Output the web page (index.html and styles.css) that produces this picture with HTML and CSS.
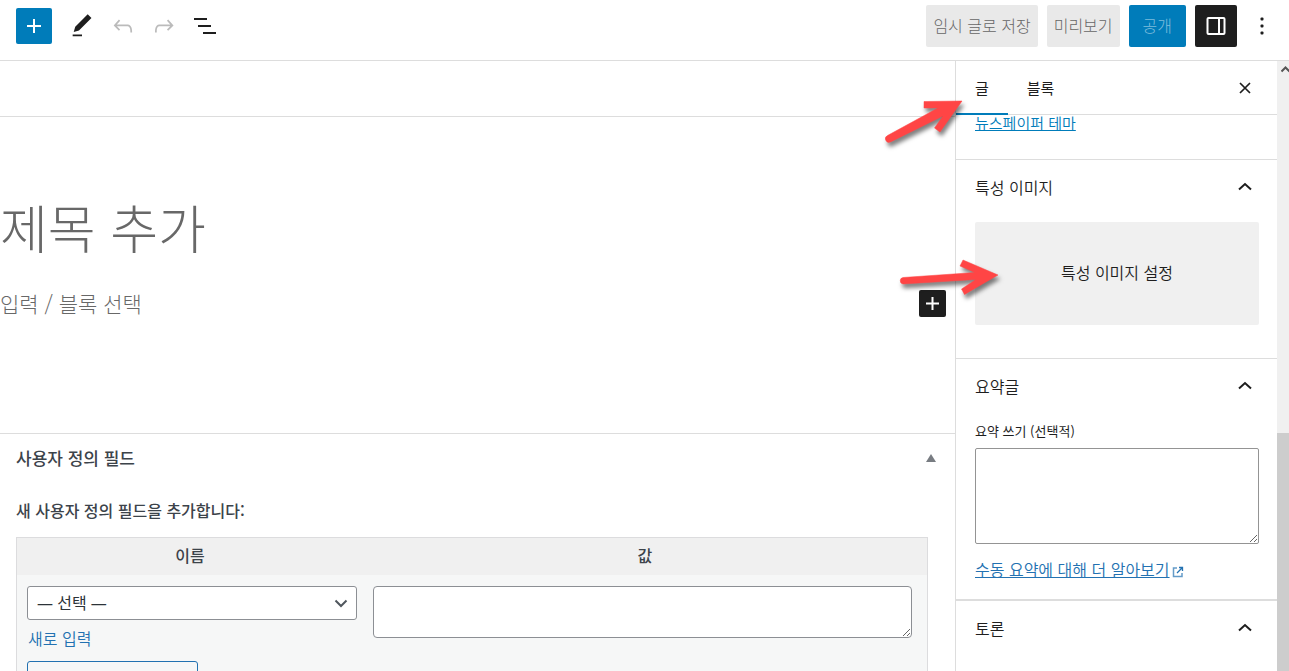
FILE: index.html
```html
<!DOCTYPE html>
<html lang="ko">
<head>
<meta charset="utf-8">
<title>새 글 추가</title>
<link rel="stylesheet" href="styles.css">
</head>
<body>
<div class="app">
  <header class="toolbar">
    <div class="tools">
      <button class="tool tool-add" aria-label="블록 추가"><svg width="24" height="24" viewBox="0 0 24 24"><path d="M12 5v14M5 12h14" stroke="currentColor" stroke-width="2"/></svg></button>
      <button class="tool" aria-label="도구"><svg width="28" height="28" viewBox="0 0 24 24"><path fill="currentColor" d="M20.1 5.1L16.9 2 6.2 12.7l-1.3 4.4 4.500-1.300L20.100 5.100zM4 20.800h8v-1.500H4v1.500z"/></svg></button>
      <button class="tool tool-off" aria-label="되돌리기"><svg width="28" height="28" viewBox="0 0 24 24"><path fill="currentColor" d="M18.3 11.7c-.6-.6-1.4-.9-2.3-.9H6.7l2.9-3.3-1.1-1-4.5 5L8.5 16l1-1-2.7-2.7H16c.5 0 .9.2 1.3.5 1 1 1 3.4 1 4.5v.3h1.5v-.2c0-1.5 0-4.3-1.5-5.7z"/></svg></button>
      <button class="tool tool-off" aria-label="다시 실행"><svg width="28" height="28" viewBox="0 0 24 24"><path fill="currentColor" d="M15.6 6.5l-1.1 1 2.9 3.3H8c-.9 0-1.7.3-2.3.9-1.4 1.5-1.4 4.2-1.4 5.6v.2h1.5v-.3c0-1.1 0-3.5 1-4.5.3-.3.7-.5 1.3-.5h9.2L14.5 15l1.1 1.1 4.6-4.6-4.6-5z"/></svg></button>
      <button class="tool" aria-label="문서 개요"><svg width="28" height="28" viewBox="0 0 28 28"><path d="M3 7h13M7 14h13M12 21h13" stroke="currentColor" stroke-width="2"/></svg></button>
    </div>
    <div class="actions">
      <button class="btn btn-gray">임시 글로 저장</button>
      <button class="btn btn-gray">미리보기</button>
      <button class="btn btn-publish">공개</button>
      <button class="btn btn-settings" aria-label="설정"><svg width="20" height="20" viewBox="0 0 20 20" fill="none" stroke="currentColor" stroke-width="2"><rect x="1.5" y="2" width="17" height="16" rx="1"/><path d="M13 2v16"/></svg></button>
      <button class="more" aria-label="옵션"><svg width="24" height="24" viewBox="0 0 24 24" fill="currentColor"><rect x="10.5" y="3.5" width="3" height="3" rx="1"/><rect x="10.5" y="10.5" width="3" height="3" rx="1"/><rect x="10.5" y="17.5" width="3" height="3" rx="1"/></svg></button>
    </div>
  </header>

  <div class="body">
    <main class="editor">
      <div class="notice"></div>
      <section class="canvas">
        <h1 class="title">제목 추가</h1>
        <div class="prompt">
          <p class="prompt-text">입력 / 블록 선택</p>
          <button class="inserter" aria-label="블록 추가"><svg width="17" height="17" viewBox="0 0 17 17"><path d="M8.5 2v13M2 8.5h13" stroke="currentColor" stroke-width="2"/></svg></button>
        </div>
      </section>
      <section class="metabox">
        <div class="metabox-head">
          <h2 class="metabox-title">사용자 정의 필드</h2>
          <button class="toggle" aria-label="패널 전환"><svg width="10" height="8" viewBox="0 0 10 8"><path d="M5 0l5 8H0z" fill="currentColor"/></svg></button>
        </div>
        <p class="metabox-lead">새 사용자 정의 필드을 추가합니다:</p>
        <table class="fields">
          <thead>
            <tr><th class="col-name"><label for="field-name">이름</label></th><th><label for="field-value">값</label></th></tr>
          </thead>
          <tbody>
            <tr>
              <td class="cell-name">
                <span class="select-wrap">
                  <select id="field-name" class="select"><option>— 선택 —</option></select>
                  <svg class="select-arrow" width="14" height="9" viewBox="0 0 14 9"><path d="M1.500 1.500L7 7l5.500-5.500" fill="none" stroke="currentColor" stroke-width="2"/></svg>
                </span>
                <a class="enter-new" href="#">새로 입력</a>
                <button class="add-field" aria-label="사용자 정의 필드 추가"></button>
              </td>
              <td class="cell-value"><textarea id="field-value" class="area area-value"></textarea></td>
            </tr>
          </tbody>
        </table>
      </section>
    </main>

    <aside class="sidebar">
      <div class="tabs">
        <button class="tab tab-on">글</button>
        <button class="tab">블록</button>
        <button class="close" aria-label="설정 닫기"><svg width="12" height="12" viewBox="0 0 12 12"><path d="M1 1l10 10M11 1L1 11" stroke="currentColor" stroke-width="1.700"/></svg></button>
      </div>
      <div class="panel panel-link"><a class="link" href="#">뉴스페이퍼 테마</a></div>
      <section class="panel panel-image">
        <button class="panel-head">특성 이미지<svg width="14" height="9" viewBox="0 0 14 9"><path d="M1 7.500L7 2l6 5.500" fill="none" stroke="currentColor" stroke-width="2"/></svg></button>
        <button class="set-image">특성 이미지 설정</button>
      </section>
      <section class="panel panel-excerpt">
        <button class="panel-head">요약글<svg width="14" height="9" viewBox="0 0 14 9"><path d="M1 7.500L7 2l6 5.500" fill="none" stroke="currentColor" stroke-width="2"/></svg></button>
        <label class="label" for="excerpt">요약 쓰기 (선택적)</label>
        <textarea id="excerpt" class="area area-excerpt"></textarea>
        <a class="learn" href="#"><span class="learn-text">수동 요약에 대해 더 알아보기</span><svg class="external" width="12" height="12" viewBox="0 0 12 12" fill="none" stroke="currentColor"><path d="M5 2H1.500v8.500H10V7" stroke-width="1.500" opacity=".7"/><path d="M7 1.500h3.500V5M10.500 1.500L5 7" stroke-width="1.300"/></svg></a>
      </section>
      <section class="panel panel-last">
        <button class="panel-head">토론<svg width="14" height="9" viewBox="0 0 14 9"><path d="M1 7.500L7 2l6 5.500" fill="none" stroke="currentColor" stroke-width="2"/></svg></button>
      </section>
      <svg class="arrows" width="130" height="220" viewBox="880 90 130 220" aria-hidden="true">
        <g fill="#ff4545" stroke="#ff4545" stroke-linejoin="round">
          <path d="M962 101L924 101.500V108H938L887.500 135.500A3.500 3.500 0 0 0 890.500 142L943 116L934.500 128L940 132Z" stroke-width=".5"/>
          <path d="M998 275L963 260L960 266L975 272.500L903 277.500A3.300 3.300 0 0 0 903 284L976 279.500L961.500 289L964.500 294.500Z" stroke-width=".5"/>
        </g>
      </svg>
    </aside>
    <div class="scrollbar" aria-hidden="true">
      <svg class="scroll-up" width="8" height="7" viewBox="0 0 8 7"><path d="M.500 5.500L4.500 1.500l4 4" fill="none" stroke="#555" stroke-width="2"/></svg>
      <div class="thumb"></div>
    </div>
  </div>
</div>
</body>
</html>
```
FILE: styles.css
```css
* { box-sizing: border-box; }

body {
  margin: 0;
  font: 16px/24px "Noto Sans CJK KR", sans-serif;
  color: #1e1e1e;
  background: #fff;
}

h1, h2, p { margin: 0; }

button {
  border: 0;
  padding: 0;
  background: none;
  color: inherit;
  font: inherit;
  display: flex;
  align-items: center;
  justify-content: center;
}

svg { display: block; flex: none; }

.app {
  display: flex;
  flex-direction: column;
  height: 100vh;
  overflow: hidden;
}

/* Top toolbar */
.toolbar {
  display: flex;
  flex: none;
  justify-content: space-between;
  height: 61px;
  padding: 5px 12px 0 16px;
  border-bottom: 1px solid #ddd;
}
.tools { display: flex; gap: 5px; height: 42px; align-items: center; }
.tool { width: 36px; height: 36px; }
.tool-add { margin-right: 7px; border-radius: 2px; background: #007cba; color: #fff; }
.tool-off { color: #bbb; }
.actions { display: flex; gap: 9px; height: 42px; }
.btn { height: 42px; padding-bottom: 2px; border-radius: 2px; font-weight: 300; white-space: nowrap; }
.btn-gray { padding: 0 7px 2px; background: #e9e9e9; color: #666; }
.btn-publish { padding: 0 14px 2px; background: #007cba; color: #7fbddc; }
.btn-settings { width: 42px; padding: 0; background: #1e1e1e; color: #fff; }
.more { width: 31px; }

/* Columns */
.body { display: flex; flex: 1; min-height: 0; }
.editor { display: flex; flex: 1; flex-direction: column; min-width: 0; overflow: hidden; }

.notice { flex: none; height: 56px; border-bottom: 1px solid #ddd; }
.canvas { flex: none; padding: 70px 9px 114px 0; color: #686868; }
.title { font-size: 52px; line-height: 80px; font-weight: 300; }
.prompt { display: flex; align-items: center; justify-content: space-between; padding-top: 20px; }
.prompt-text { font-size: 21px; line-height: 32px; font-weight: 300; }
.inserter { width: 27px; height: 27px; border-radius: 2px; background: #1e1e1e; color: #fff; }

/* Custom fields */
.metabox { flex: none; padding: 0 27px 0 16px; border-top: 1px solid #ddd; color: #3c434a; }
.metabox-head { display: flex; align-items: center; justify-content: space-between; height: 48px; }
.metabox-title { font-size: 17px; line-height: 24px; font-weight: 500; }
.toggle { width: 10px; height: 24px; margin-right: -8px; color: #787c82; }
.metabox-lead { padding: 16px 0 15px; font-weight: 500; }
.fields {
  width: 100%;
  table-layout: fixed;
  border: 1px solid #dcdcde;
  border-spacing: 0;
  background: #f6f7f7;
}
.fields th { height: 37px; padding: 0 0 4px; background: #f0f0f0; font-weight: 500; }
.col-name { width: 38%; }
.fields td { padding: 0; vertical-align: top; }
.fields .cell-name { padding: 11px 6px 11px 10px; }
.fields .cell-value { padding: 11px 15px 11px 10px; }
.select-wrap { display: block; position: relative; }
.select {
  display: block;
  appearance: none;
  width: 100%;
  height: 34px;
  padding: 0 24px 1px 9px;
  border: 1px solid #8c8f94;
  border-radius: 3px;
  background: #fff;
  color: #2c3338;
  font: 16px/24px "Noto Sans", "Noto Sans CJK KR", sans-serif;
}
.select-arrow { position: absolute; right: 9px; top: 13px; color: #50575e; pointer-events: none; }
.enter-new { display: block; padding: 6px 1px 11px; color: #2271b1; text-decoration: none; }
.add-field { width: 171px; height: 34px; border: 1px solid #2271b1; border-radius: 3px; background: #f6f7f7; }
.area { display: block; width: 100%; background: #fff; font: inherit; }
.area-value { height: 52px; border: 1px solid #8c8f94; border-radius: 4px; }

/* Settings sidebar */
.sidebar { position: relative; flex: none; width: 322px; border-left: 1px solid #ddd; }
.tabs { display: flex; height: 54px; border-bottom: 1px solid #ddd; padding-right: 26px; }
.tab { height: 54px; padding: 0 19px; font-size: 15px; }
.tab-on { border-bottom: 2px solid #007cba; padding-top: 2px; }
.close { width: 12px; margin-left: auto; }
.panel { padding: 0 18px 0 19px; border-bottom: 1px solid #ddd; }
.panel-link { height: 45px; font-size: 15px; line-height: 16px; }
.link { color: #007cba; }
.panel-head { width: 100%; height: 56px; padding: 0 7px 3px 0; justify-content: space-between; }
.panel-image { padding-bottom: 33px; }
.set-image { width: 100%; height: 103px; margin-top: 6px; padding-bottom: 4px; border-radius: 2px; background: #f0f0f0; }
.panel-excerpt { padding-bottom: 17px; border-bottom-width: 2px; }
.panel-last { border-bottom: 0; }
.label { display: block; padding-top: 6px; font-size: 13px; line-height: 20px; }
.area-excerpt { height: 96px; margin-top: 7px; border: 1px solid #949494; border-radius: 2px; }
.learn { display: flex; align-items: center; gap: 2px; padding: 13px 0 1px; color: #2271b1; text-decoration: none; }
.learn-text { text-decoration: underline; }
.external { margin-top: 5px; }
.panel-link, .panel-head, .set-image, .learn, .enter-new { font-weight: 350; }

/* Red pointers laid over the panels */
.arrows {
  position: absolute;
  left: -76px;
  top: 29px;
  overflow: visible;
  pointer-events: none;
  filter: drop-shadow(2px 4px 2px rgba(0, 0, 0, .5));
}

/* Scroll track */
.scrollbar { display: flex; flex: none; flex-direction: column; justify-content: space-between; width: 12px; background: #f0f0f0; }
.scroll-up { margin: 5px 0 0 4px; }
.thumb { height: 39%; background: #cdcdcd; }
```
